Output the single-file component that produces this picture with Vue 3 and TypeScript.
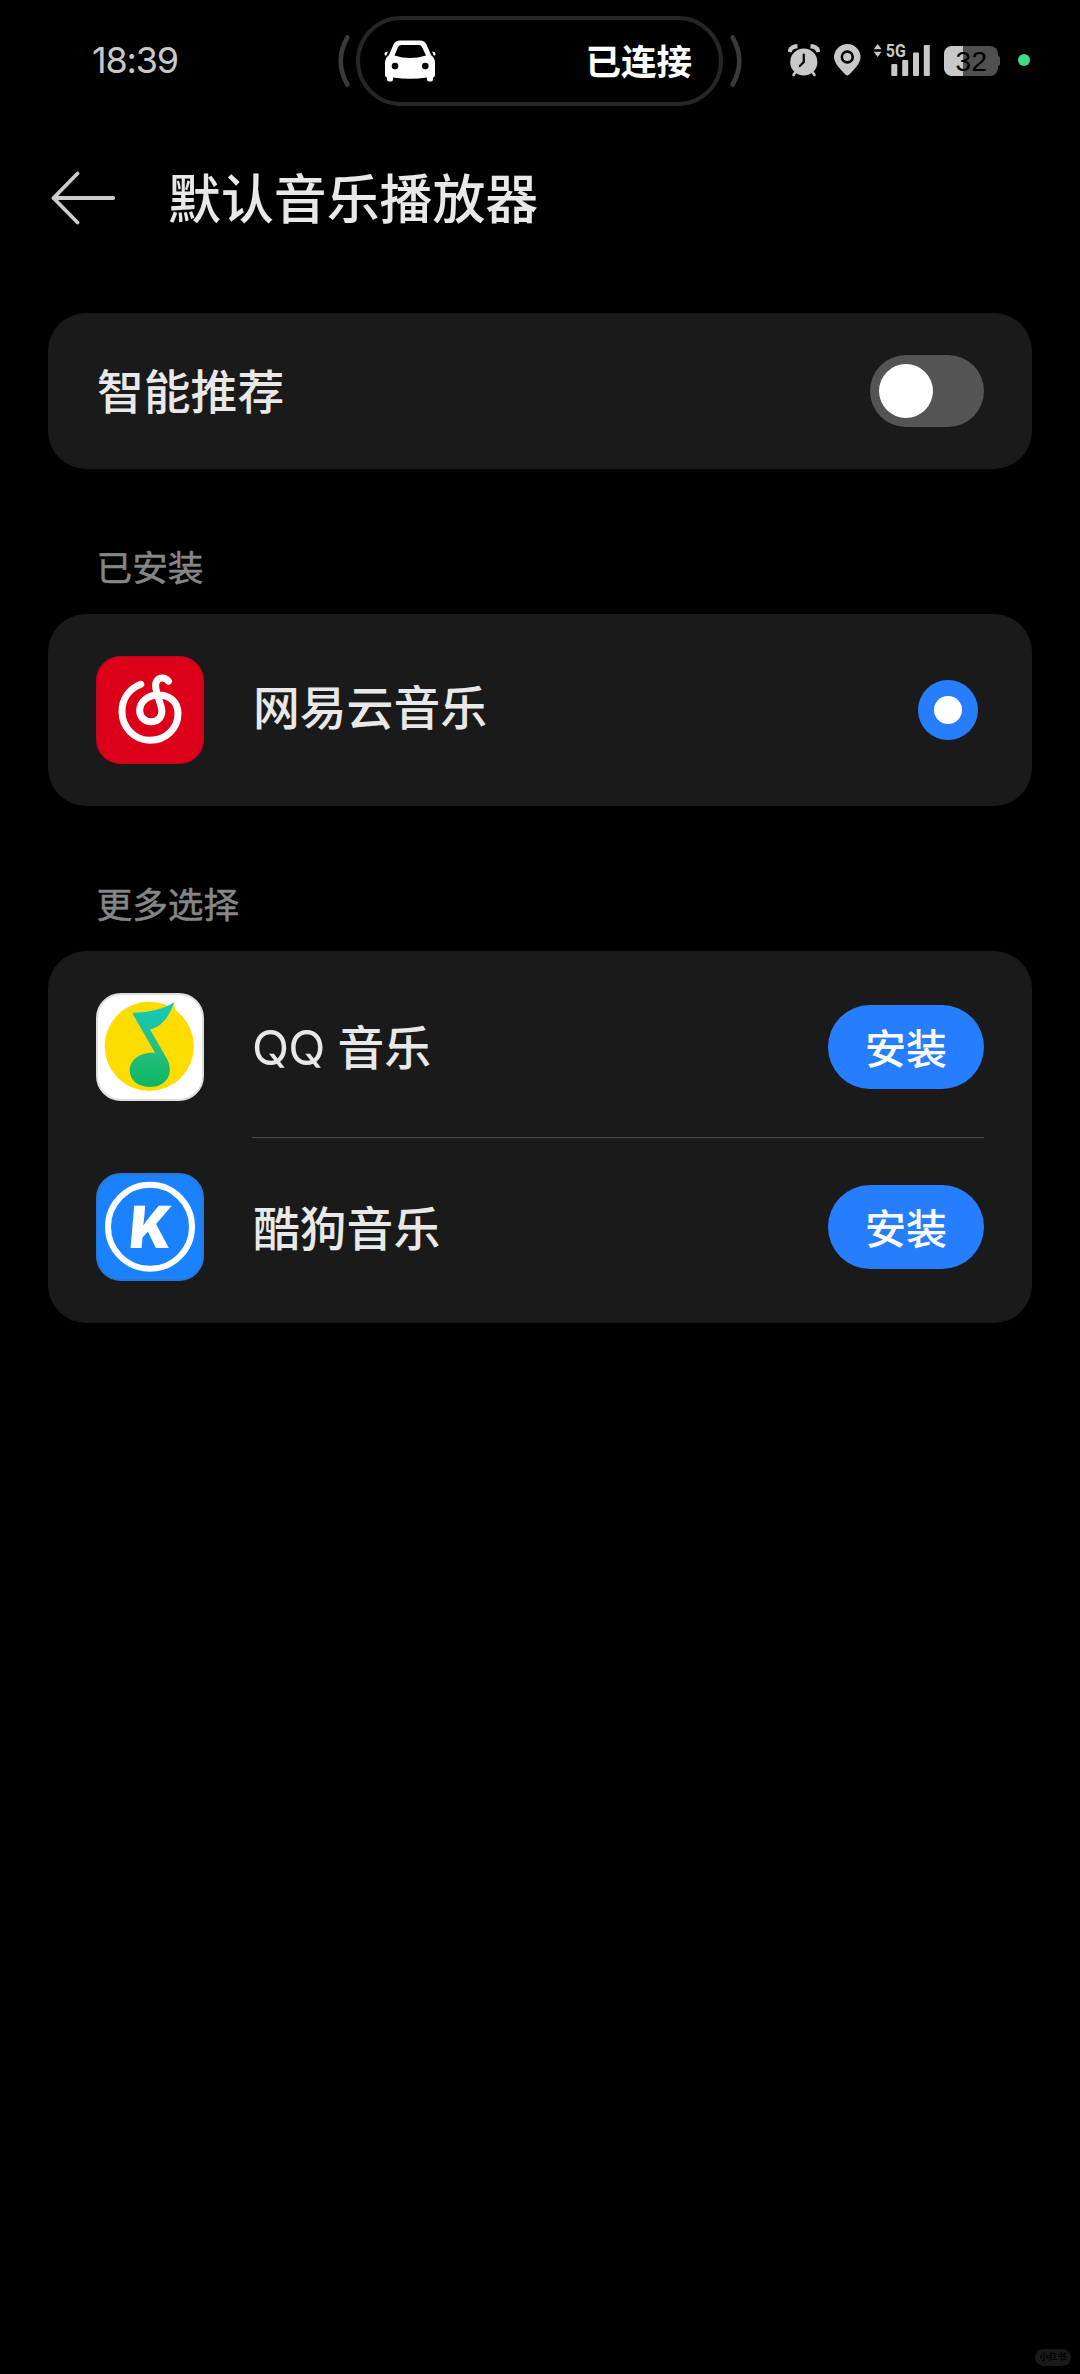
<script setup lang="ts">
import { ref } from 'vue'

interface PlayerApp {
  id: 'qq' | 'kugou'
  latin?: string
  name: string
}

const time = '18:39'
const battery = 32
const smart = ref(false)
const moreApps: PlayerApp[] = [
  { id: 'qq', latin: 'QQ', name: '音乐' },
  { id: 'kugou', name: '酷狗音乐' },
]
</script>

<template>
  <div class="screen">
    <header class="status">
      <span class="time">{{ time }}</span>
      <svg class="arc" width="12" height="54" viewBox="0 0 12 54"><path d="M9.3 3.5Q-3.9 27 9.3 50.5" /></svg>
      <div class="island">
        <svg class="car" width="52" height="42" viewBox="0 0 52 42">
          <path
            fill="#fff"
            fill-rule="evenodd"
            d="M16 0.5H36Q40.500 0.500 42.500 4.500L47 15Q51 18 51 23V35Q51 37 49 37.500V39.500Q49 41.500 47 41.500H45Q43 41.500 43 39.500V37.500Q26 40 9 37.500V39.500Q9 41.500 7 41.500H5Q3 41.500 3 39.500V37.500Q1 37 1 35V23Q1 18 5 15L9.500 4.500Q11.500 0.500 16 0.500ZM17.500 5Q15 5 14 7L10.500 15.500Q26 20.500 42 15.500L38 7Q37 5 34.500 5ZM11 22.800A3.300 3.300 0 1 0 11 29.400A3.300 3.300 0 1 0 11 22.800ZM41.300 22.800A3.300 3.300 0 1 0 41.300 29.400A3.300 3.300 0 1 0 41.300 22.800Z"
          />
          <path fill="#fff" d="M4 11.500L1.500 12Q0 13 0.500 14.500L2 16ZM48 11.500L50.500 12Q52 13 51.500 14.500L50 16Z" />
        </svg>
        <span class="linked">已连接</span>
      </div>
      <svg class="arc" width="12" height="54" viewBox="0 0 12 54"><path d="M2.700 3.500Q15.900 27 2.700 50.500" /></svg>
      <svg class="alarm" width="32" height="33" viewBox="0 0 32 33">
        <g stroke="#c8c8c8" fill="none" stroke-linecap="round">
          <path stroke-width="4.200" stroke-linecap="butt" d="M1.500 8Q2.500 2.800 9.500 2.200M30.500 8Q29.500 2.800 22.500 2.200" />
          <path stroke-width="2.600" d="M7.500 28L5.500 31M24.500 28L26.500 31" />
        </g>
        <circle cx="15.800" cy="18" r="13.600" fill="#c8c8c8" />
        <path d="M15.800 10.500V18L11.800 22" fill="none" stroke="#000" stroke-width="2.200" stroke-linecap="round" stroke-linejoin="round" />
      </svg>
      <svg class="pin" width="27" height="32" viewBox="0 0 27 32">
        <path d="M13.300 31.500Q12 31.500 8 27Q0 19 0 13.300A13.300 13.300 0 0 1 26.600 13.300Q26.600 19 18.600 27Q14.600 31.500 13.300 31.500Z" fill="#c8c8c8" />
        <circle cx="13.300" cy="13" r="5.400" fill="none" stroke="#000" stroke-width="2.600" />
      </svg>
      <svg class="signal" width="58" height="34" viewBox="0 0 58 34">
        <g fill="#c8c8c8">
          <path d="M0.800 6.200L4.700 1L8.600 6.200ZM0.800 8.800H8.600L4.700 14Z" />
          <rect x="18.300" y="21" width="6" height="12" rx="1" />
          <rect x="29.200" y="17" width="6" height="16" rx="1" />
          <rect x="40" y="9.500" width="6" height="23.500" rx="1" />
          <rect x="50.800" y="2" width="6" height="31" rx="1" />
          <text x="12.800" y="14.300" textLength="20" lengthAdjust="spacingAndGlyphs" class="net">5G</text>
        </g>
      </svg>
      <div class="battery">
        <span class="level" :style="{ width: battery + '%' }"></span>
        <span class="percent">{{ battery }}</span>
      </div>
      <span class="nub"></span>
      <span class="dot"></span>
    </header>

    <nav class="title-bar">
      <svg width="66" height="54" viewBox="0 0 66 54">
        <path d="M27.500 2.500L3.500 27L27.500 51.500M3.500 27H63.200" fill="none" stroke="#cbcbcb" stroke-width="3.800" stroke-linecap="round" stroke-linejoin="round" />
      </svg>
      <h1>默认音乐播放器</h1>
    </nav>

    <section class="card smart">
      <span class="label">智能推荐</span>
      <button class="toggle" :class="{ on: smart }" @click="smart = !smart"><i></i></button>
    </section>

    <h2>已安装</h2>
    <section class="card installed">
      <svg class="app-icon" viewBox="0 0 108 108">
        <rect x="0.500" y="0.500" width="107" height="107" rx="24" fill="#dc0019" stroke="#b90b1f" />
        <path
          d="M44.800 28.300C33 33 26 43 26 55.500C26 71.500 38.500 84.300 54 84.300C70 84.300 82 72.500 82 57.500C82 46 73.500 39 62.500 39C51.500 39 43.700 46 43.700 54.500C43.700 61 48.500 65.800 55 65.800C62.500 65.800 67.200 60 65.600 52.500C64 46 60.500 37 59.800 32C58.700 25.500 62 22 66.500 22C69.500 22 71 23.500 72.500 25.300"
          fill="none" stroke="#fff" stroke-width="7" stroke-linecap="round" stroke-linejoin="round"
        />
      </svg>
      <span class="label">网易云音乐</span>
      <span class="radio"><i></i></span>
    </section>

    <h2>更多选择</h2>
    <section class="card more">
      <div v-for="app in moreApps" :key="app.id" class="row">
        <svg v-if="app.id === 'qq'" class="app-icon" viewBox="0 0 108 108">
          <defs>
            <linearGradient id="note" x1="0" y1="0" x2="0" y2="1">
              <stop offset="0" stop-color="#0fcac4" />
              <stop offset="0.500" stop-color="#2abf86" />
              <stop offset="1" stop-color="#0db661" />
            </linearGradient>
          </defs>
          <rect x="1" y="1" width="106" height="106" rx="24" fill="#fff" stroke="#dedede" stroke-width="2" />
          <circle cx="53.300" cy="53.300" r="44.600" fill="#ffdc00" />
          <path d="M70 14L78 9.500L79.500 18.500Z" fill="#ffdc00" />
          <path
            d="M37.500 19.500C53 19.500 68 16 78.200 9.200C73 24 66 33.500 54 36.500L70.500 65C73.500 70 74.500 76 73.200 81.500C71 89.500 63 94 54 94C42.500 94 33.700 87.500 33.700 77.500C33.700 66.500 44.500 59 59 59.800L37.300 22Q36.500 19.800 37.500 19.500Z"
            fill="url(#note)"
          />
        </svg>
        <svg v-else class="app-icon" viewBox="0 0 108 108">
          <rect x="1" y="1" width="106" height="106" rx="24" fill="#1a82ff" stroke="#2a78d6" stroke-width="2" />
          <circle cx="54" cy="53.800" r="42" fill="none" stroke="#fff" stroke-width="6" />
          <text class="k" transform="translate(32 75) skewX(-5)" textLength="42" lengthAdjust="spacingAndGlyphs">K</text>
        </svg>
        <div class="row-body">
          <span class="label"><span v-if="app.latin" class="latin">{{ app.latin }}</span>{{ app.name }}</span>
          <button class="install">安装</button>
        </div>
      </div>
    </section>

    <span class="mark">小红书</span>
  </div>
</template>

<style>
body {
  background: #000;
}
</style>

<style scoped>
.screen {
  width: 1080px;
  height: 2374px;
  box-sizing: border-box;
  background: #000;
  color: #e8e8e8;
  font-family: "Noto Sans CJK SC", sans-serif;
  font-weight: 500;
  display: flex;
  flex-direction: column;
}
svg {
  display: block;
  flex: none;
}
button {
  border: 0;
  padding: 0;
  font: inherit;
}
.status {
  height: 122px;
  display: flex;
  align-items: center;
  flex: none;
}
.time {
  font: 400 36px/44px Inter, "Liberation Sans", sans-serif;
  color: #c8c8c8;
  letter-spacing: -1.200px;
  width: 246px;
  margin: 0 0 2px 92px;
}
.arc path {
  fill: none;
  stroke: #3a3a3a;
  stroke-width: 4.600;
  stroke-linecap: round;
}
.island {
  width: 367px;
  height: 90px;
  box-sizing: border-box;
  border: 4px solid #262626;
  border-radius: 45px;
  margin: 0 7px 0 6px;
  display: flex;
  align-items: center;
  justify-content: space-between;
  padding: 0 27px 0 24px;
}
.linked {
  color: #fff;
  font-size: 35.500px;
  font-weight: 700;
  line-height: 54px;
  margin-bottom: 2px;
}
.alarm {
  margin-left: 46px;
  margin-bottom: 2px;
}
.pin {
  margin: 0 0 2px 14px;
}
.signal {
  margin: 0 0 3px 12px;
}
.net {
  font: 700 18px Roboto, sans-serif;
}
.battery {
  position: relative;
  width: 54px;
  height: 30px;
  margin: 0 0 1px 13px;
  border-radius: 8px;
  background: #505050;
  display: flex;
}
.level {
  background: #c8c8c8;
  min-width: 19px;
  border-radius: 8px 0 0 8px;
}
.percent {
  position: absolute;
  left: 11.500px;
  top: 0;
  font: 400 28px/32px "Liberation Sans", Arial, sans-serif;
  letter-spacing: 0.500px;
  color: #000;
}
.nub {
  width: 2px;
  height: 10px;
  background: #505050;
  border-radius: 0 2px 2px 0;
}
.dot {
  width: 12px;
  height: 12px;
  border-radius: 50%;
  background: #3ddc84;
  margin: 0 0 2px 18px;
}
.title-bar {
  height: 152px;
  margin: 0 0 39px 50px;
  display: flex;
  align-items: center;
}
h1 {
  margin: 0 0 4px 52px;
  font-size: 52.900px;
  line-height: 78px;
  font-weight: 500;
}
.card {
  margin: 0 48px;
  background: #1a1a1a;
  border-radius: 38px;
  box-sizing: border-box;
  padding: 0 48px;
  display: flex;
  align-items: center;
  flex: none;
}
.smart {
  height: 156px;
  justify-content: space-between;
}
.label {
  font-size: 46.800px;
  line-height: 70px;
  padding-bottom: 4px;
}
.smart .label {
  padding-left: 1px;
}
.toggle {
  width: 114px;
  height: 72px;
  border-radius: 36px;
  background: #545454;
  padding: 9px;
  display: flex;
}
.toggle.on {
  background: #267eff;
  justify-content: flex-end;
}
.toggle i {
  width: 54px;
  height: 54px;
  border-radius: 50%;
  background: #fff;
}
h2 {
  margin: 0 0 0 96.500px;
  padding: 70px 0 21px;
  font-size: 35.700px;
  line-height: 54px;
  font-weight: 400;
  color: #868686;
  -webkit-text-stroke: 0.500px #868686;
  flex: none;
}
.installed {
  height: 192px;
}
.app-icon {
  width: 108px;
  height: 108px;
}
.installed .label {
  flex: 1;
  margin-left: 49px;
  padding-bottom: 10px;
}
.radio {
  width: 60px;
  height: 60px;
  margin-right: 6px;
  border-radius: 50%;
  background: #267eff;
  display: grid;
  place-items: center;
}
.radio i {
  width: 28px;
  height: 28px;
  border-radius: 50%;
  background: #fff;
}
.more {
  flex-direction: column;
  align-items: stretch;
  padding-top: 6px;
  padding-bottom: 6px;
}
.row {
  height: 180px;
  display: flex;
  align-items: center;
}
.row-body {
  flex: 1;
  height: 180px;
  box-sizing: border-box;
  margin-left: 48px;
  padding-left: 1px;
  display: flex;
  align-items: center;
  justify-content: space-between;
}
.row-body .label {
  padding-bottom: 2px;
}
.row:first-child .row-body {
  box-shadow: 0 1px #484848;
}
.latin {
  font-family: Inter, sans-serif;
  font-weight: 400;
  font-size: 48.500px;
  letter-spacing: -0.800px;
  margin: 0 13px 0 -1px;
}
.install {
  width: 156px;
  height: 84px;
  border-radius: 42px;
  background: #267eff;
  color: #fff;
  font-size: 41px;
  line-height: 62px;
  padding-bottom: 2px;
}
.k {
  font: 900 58px Inter, sans-serif;
  fill: #fff;
}
.mark {
  width: 36px;
  height: 17px;
  border-radius: 9px;
  background: #1a1a1a;
  color: #000;
  font-size: 9px;
  font-weight: 700;
  line-height: 16px;
  text-align: center;
  margin: auto 9px 8px auto;
}
</style>
